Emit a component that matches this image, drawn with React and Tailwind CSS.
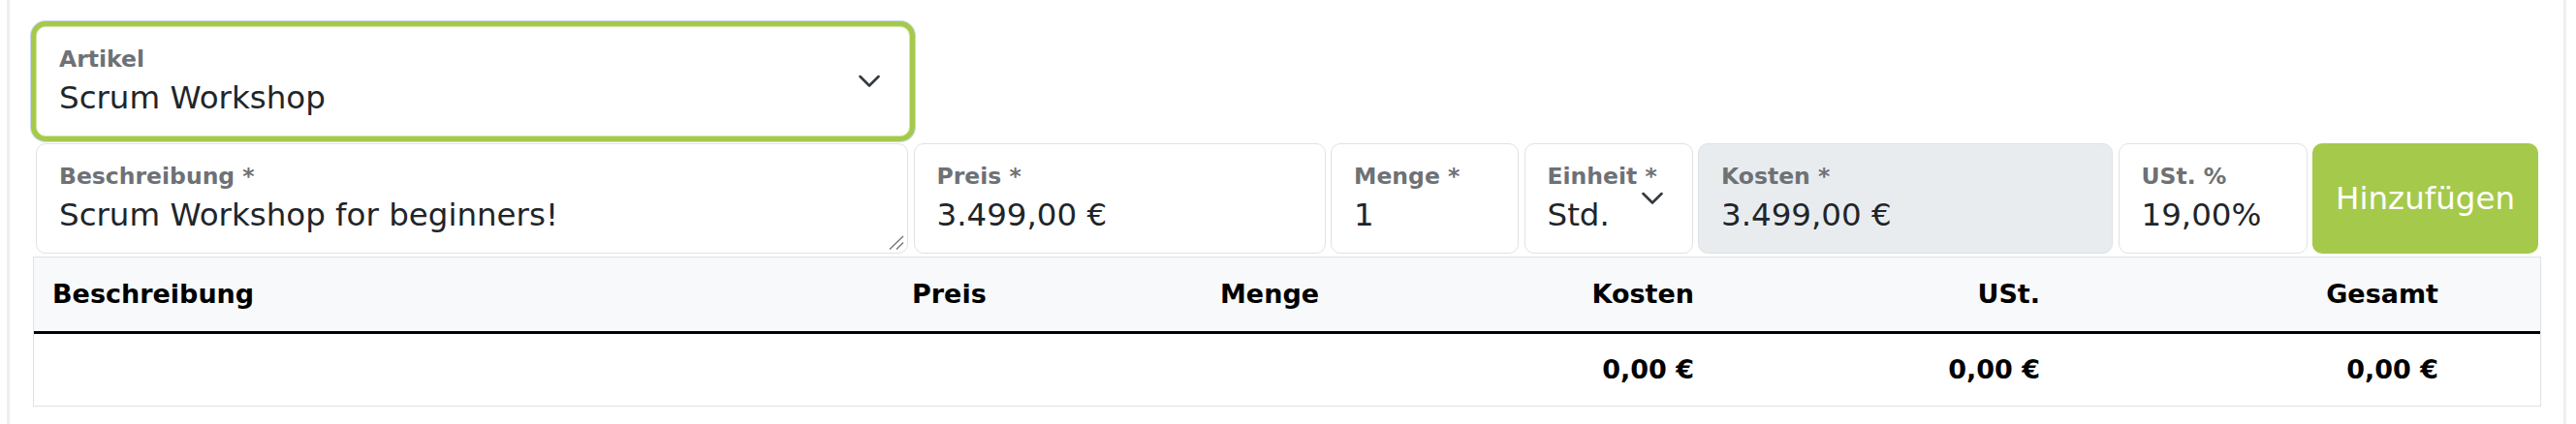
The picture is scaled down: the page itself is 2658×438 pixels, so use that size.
import React from 'react';

const fields = [
  { label: 'Beschreibung *', value: 'Scrum Workshop for beginners!', width: 'w-[900px]', textarea: true },
  { label: 'Preis *', value: '3.499,00 €', width: 'w-[425px]' },
  { label: 'Menge *', value: '1', width: 'w-[194px]' },
  { label: 'Einheit *', value: 'Std.', width: 'w-[174px]', select: true },
  { label: 'Kosten *', value: '3.499,00 €', width: 'w-[428px]', readOnly: true },
  { label: 'USt. %', value: '19,00%', width: 'w-[195px]' },
];

const columns = [
  { label: 'Beschreibung', align: 'text-left' },
  { label: 'Preis', align: 'text-left' },
  { label: 'Menge', align: 'text-left' },
  { label: 'Kosten', align: 'text-right', total: '0,00 €' },
  { label: 'USt.', align: 'text-right', total: '0,00 €' },
  { label: 'Gesamt', align: 'text-right', total: '0,00 €' },
  { label: '', align: 'text-right' },
];

const Chevron = () => (
  <svg width="22" height="13" viewBox="0 0 22 13" fill="none" className="absolute right-[30px] top-1/2 -translate-y-1/2">
    <path d="M1.5 1.5 L11 11 L20.5 1.5" stroke="#343a40" strokeWidth="2.6" strokeLinecap="round" strokeLinejoin="round" />
  </svg>
);

const ResizeGrip = () => (
  <svg width="16" height="15" viewBox="0 0 16 15" className="absolute right-[3px] bottom-[3px]">
    <path d="M15 1 L1 14.5 M15 7.5 L8 14.5" stroke="#6b6b6b" strokeWidth="1.2" />
  </svg>
);

const FloatingField = ({ label, value, width, textarea, select, readOnly }) => (
  <div
    className={`relative h-[114px] shrink-0 rounded-[10px] border border-[#dee2e6] pl-[23px] pt-[19px] ${width} ${
      readOnly ? 'bg-[#e9ecef]' : 'bg-white'
    }`}
  >
    <div className="text-[23.5px] font-bold leading-[28px] text-[#6e7175] whitespace-nowrap">{label}</div>
    <div className="mt-[6px] text-[32.5px] leading-[40px] text-[#212529] whitespace-nowrap">{value}</div>
    {select && <Chevron />}
    {textarea && <ResizeGrip />}
  </div>
);

export default function App() {
  return (
    <div className="h-[438px] w-full bg-white px-[7px] font-['DejaVu_Sans','Verdana',sans-serif]">
      <div className="h-full w-[2641px] border-x-[3px] border-[#efefef] pl-[27px] pt-[27px]">
        {/* Artikel select, focused */}
        <div className="relative h-[114px] w-[902px] rounded-[10px] border border-[#d3e6a2] bg-white pl-[23px] pt-[19px] shadow-[0_0_0_5px_#a5c94a,0_0_0_6px_#c8d7f0]">
          <div className="text-[23.5px] font-bold leading-[28px] text-[#6e7175]">Artikel</div>
          <div className="mt-[6px] text-[32.5px] leading-[40px] text-[#212529]">Scrum Workshop</div>
          <Chevron />
        </div>

        {/* Position inputs */}
        <div className="mt-[7px] flex gap-[5.5px]">
          {fields.map((f) => (
            <FloatingField key={f.label} {...f} />
          ))}
          <button className="h-[114px] w-[233px] shrink-0 rounded-[10px] bg-[#a5c94a] text-[32.5px] leading-[40px] text-white">
            Hinzufügen
          </button>
        </div>

        {/* Positions table */}
        <div className="-ml-[3px] mt-[3px] w-[2588px] border border-[#dee2e6] text-black">
          <div className="grid h-[76px] grid-cols-[887px_318px_211px_316px_357px_411px_86px] items-center bg-[#f8f9fa]">
            {columns.map((c, i) => (
              <div key={i} className={`px-[19px] text-[27px] font-bold leading-[40px] ${c.align}`}>
                {c.label}
              </div>
            ))}
          </div>
          <div className="h-[3px] bg-black" />
          <div className="grid h-[74px] grid-cols-[887px_318px_211px_316px_357px_411px_86px] items-center bg-white">
            {columns.map((c, i) => (
              <div key={i} className={`px-[19px] text-[27px] font-bold leading-[40px] ${c.align}`}>
                {c.total || ''}
              </div>
            ))}
          </div>
        </div>
      </div>
    </div>
  );
}
